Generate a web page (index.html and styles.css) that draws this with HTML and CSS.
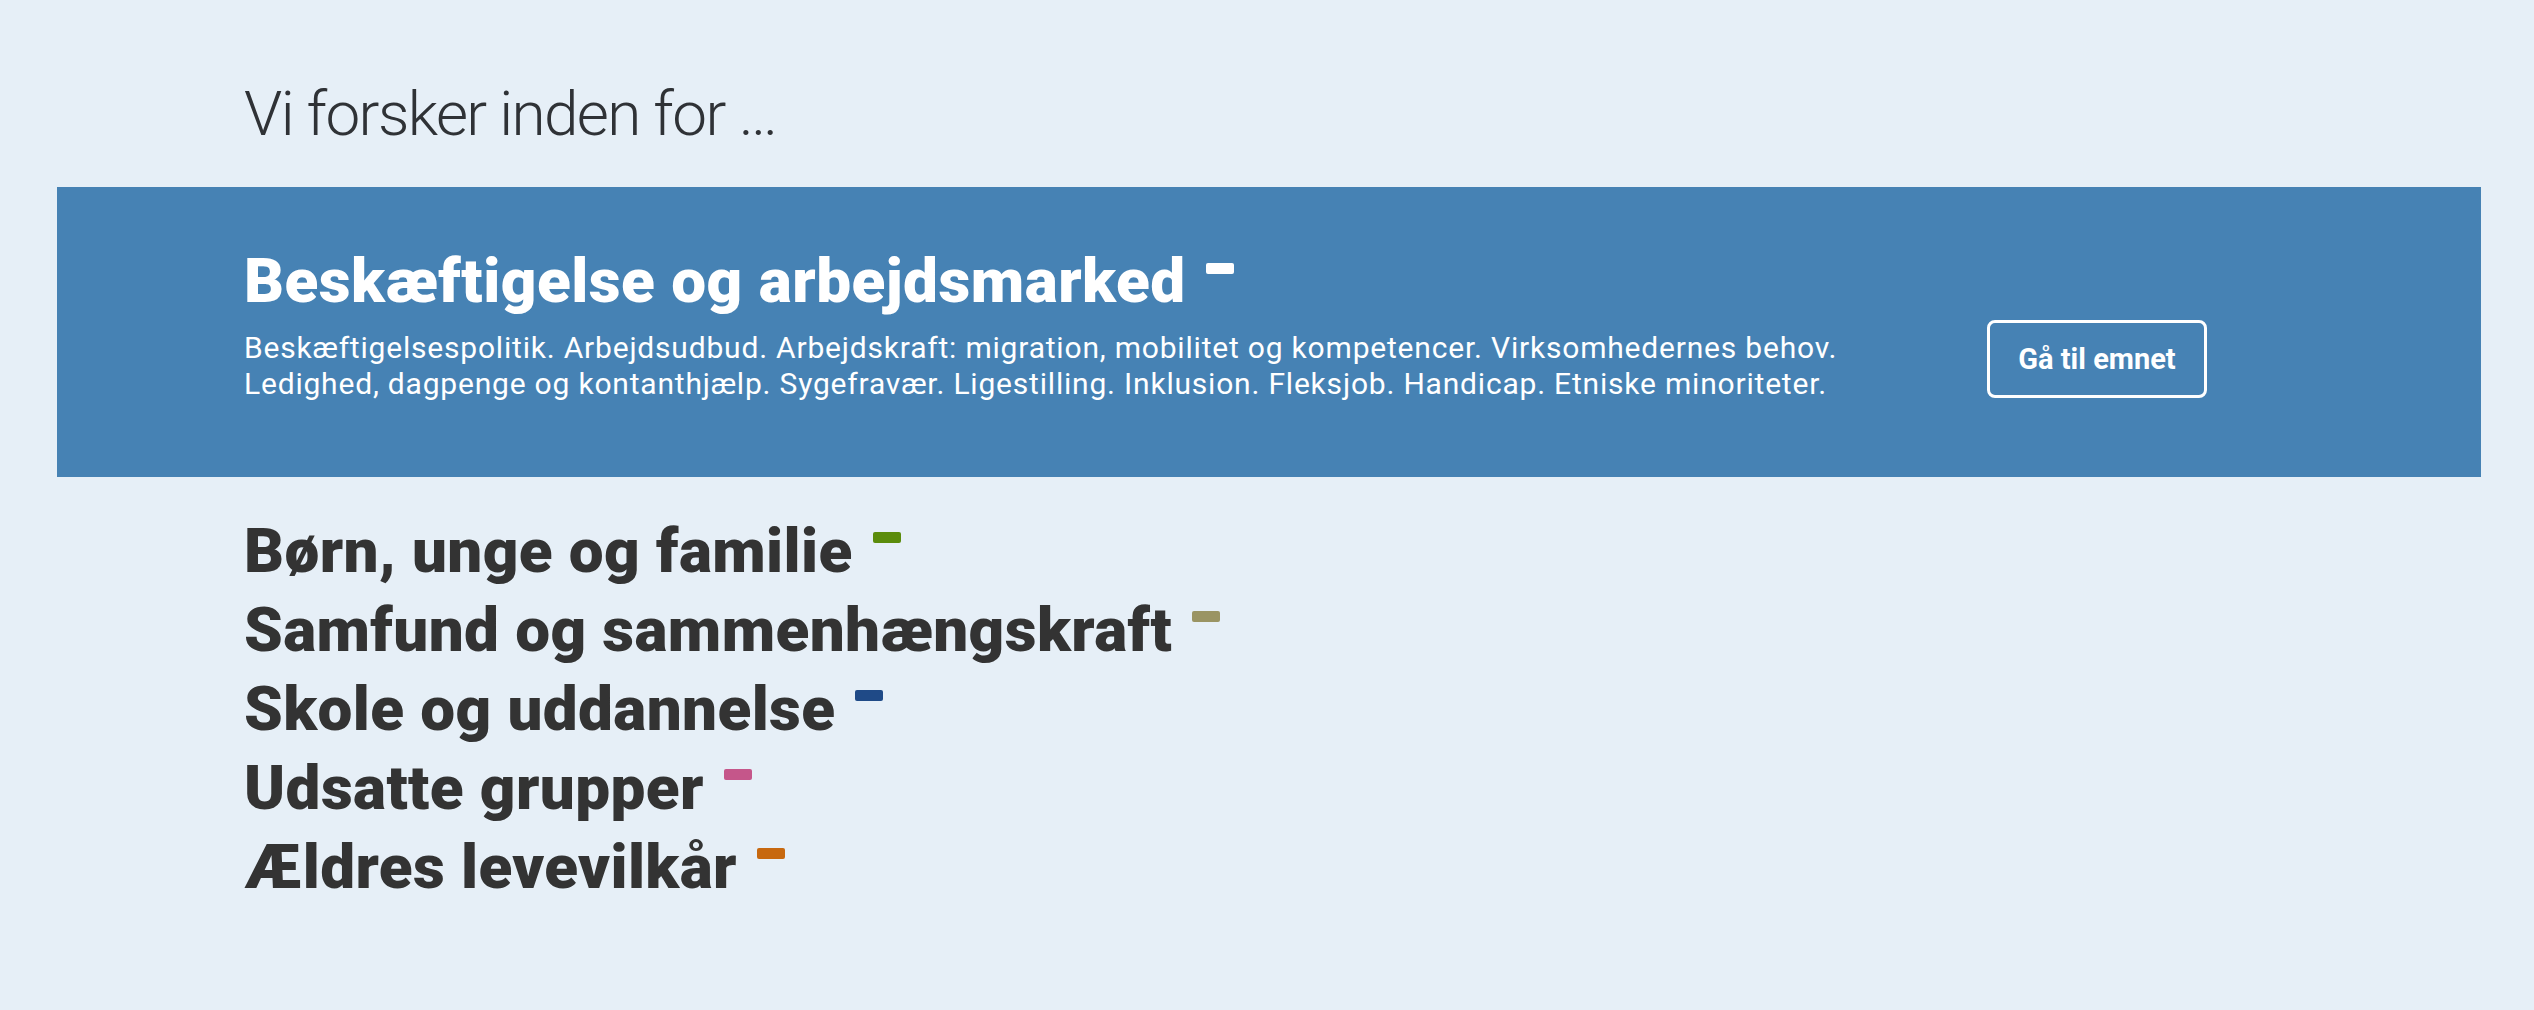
FILE: index.html
```html
<!DOCTYPE html>
<html lang="da">
<head>
<meta charset="utf-8">
<title>Vi forsker inden for</title>
<link rel="stylesheet" href="styles.css">
</head>
<body>
<main class="page">
  <h1 class="intro">Vi forsker inden for …</h1>

  <section class="band">
    <div class="band-text">
      <h2 class="topic-title">Beskæftigelse og arbejdsmarked<span class="mark mark-white"></span></h2>
      <p class="topic-desc">Beskæftigelsespolitik. Arbejdsudbud. Arbejdskraft: migration, mobilitet og kompetencer. Virksomhedernes behov.<br>Ledighed, dagpenge og kontanthjælp. Sygefravær. Ligestilling. Inklusion. Fleksjob. Handicap. Etniske minoriteter.</p>
    </div>
    <a class="btn" href="#">Gå til emnet</a>
  </section>

  <ul class="topics">
    <li class="topic">Børn, unge og familie<span class="mark mark-green"></span></li>
    <li class="topic">Samfund og sammenhængskraft<span class="mark mark-khaki"></span></li>
    <li class="topic">Skole og uddannelse<span class="mark mark-navy"></span></li>
    <li class="topic">Udsatte grupper<span class="mark mark-pink"></span></li>
    <li class="topic">Ældres levevilkår<span class="mark mark-orange"></span></li>
  </ul>
</main>
</body>
</html>
```

FILE: styles.css
```css
html, body {
  margin: 0;
  padding: 0;
}

body {
  background: #e6eff7;
  color: #333333;
  font-family: Roboto, "Noto Sans", "DejaVu Sans", sans-serif;
}

.page {
  padding: 78px 53px 0 57px;
}

.intro {
  margin: 0 0 37px 0;
  padding-left: 187px;
  font-size: 62px;
  line-height: 72px;
  font-weight: 300;
  letter-spacing: -1.6px;
  color: #2f3236;
}

.band {
  background: #4682b4;
  color: #ffffff;
  display: flex;
  align-items: flex-end;
  justify-content: space-between;
  padding: 58px 274px 75px 187px;
}

.topic-title {
  margin: 0;
  font-size: 62px;
  line-height: 72px;
  font-weight: 900;
  letter-spacing: 0.5px;
}

.topic-desc {
  margin: 13px 0 0 0;
  font-size: 30px;
  line-height: 36px;
  font-weight: 400;
  letter-spacing: 0.8px;
  white-space: nowrap;
}

.btn {
  box-sizing: border-box;
  width: 220px;
  height: 78px;
  margin-bottom: 4px;
  border: 3px solid #ffffff;
  border-radius: 8px;
  display: flex;
  align-items: center;
  justify-content: center;
  color: #ffffff;
  text-decoration: none;
  font-size: 29px;
  font-weight: 700;
  letter-spacing: 0;
}

.topics {
  list-style: none;
  margin: 34px 0 0 0;
  padding: 0 0 0 187px;
}

.topic {
  font-size: 62px;
  line-height: 79px;
  font-weight: 900;
  letter-spacing: 0.4px;
  color: #333333;
}

.mark {
  display: inline-block;
  width: 28px;
  height: 11px;
  border-radius: 2px;
  margin-left: 20px;
  vertical-align: top;
}

.topic-title .mark {
  margin-top: 18px;
}

.topic .mark {
  margin-top: 21px;
}

.mark-white { background: #ffffff; }
.mark-green { background: #5b8c0c; }
.mark-khaki { background: #9a9463; }
.mark-navy { background: #1f4a87; }
.mark-pink { background: #c5568a; }
.mark-orange { background: #c7680f; }
```
